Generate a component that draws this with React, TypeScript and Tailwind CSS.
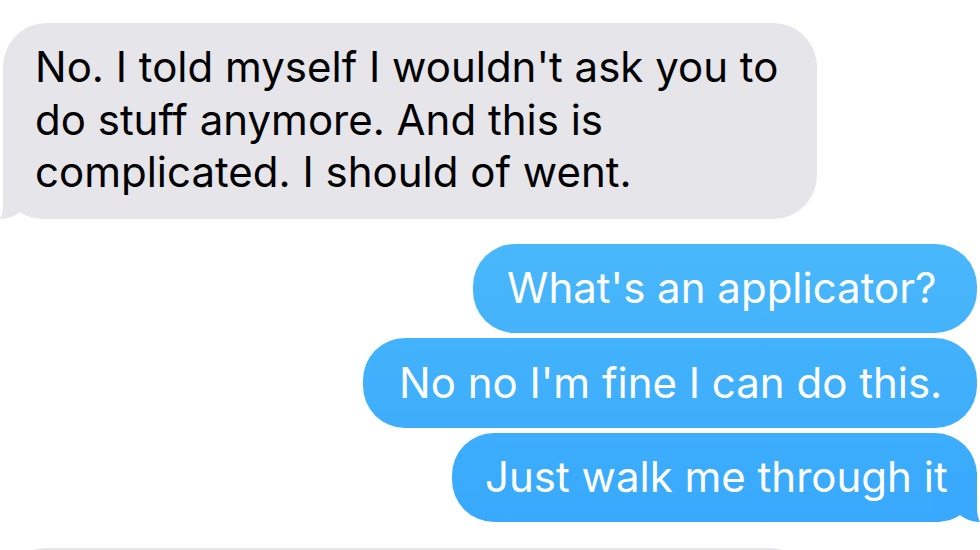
import React from 'react';

const font = { fontFamily: 'Inter, "Noto Sans", sans-serif' };

function GrayTail() {
  return (
    <svg className="absolute left-[-3px] bottom-0 w-[50px] h-[50px]" viewBox="0 0 50 50">
      <path d="M3 0 L3 36 C3 42 2 46 0 50 C8 50 15 47 20 43 C27 48 36 50 47 50 L50 50 L50 0 Z" fill="#e5e5ea" />
    </svg>
  );
}

function BlueTail() {
  return (
    <svg className="absolute right-[-3px] bottom-0 w-[50px] h-[50px]" viewBox="0 0 50 50">
      <path d="M47 0 L47 36 C47 42 48 46 50 50 C42 50 35 47 30 43 C23 48 14 50 3 50 L0 50 L0 0 Z" fill="#38a9fd" />
    </svg>
  );
}

export default function App() {
  return (
    <div className="w-[980px] h-[550px] bg-white overflow-hidden flex flex-col" style={font}>
      {/* incoming */}
      <div className="relative ml-[3px] mt-[23px] w-[814px] rounded-[44px] bg-[#e5e5ea] pl-[32px] pt-[18px] pb-[20px] text-[42px] leading-[52.5px] text-black whitespace-nowrap">
        <GrayTail />
        <span className="relative">
          No. I told myself I wouldn't ask you to<br />
          do stuff anymore. And this is<br />
          complicated. I should of went.
        </span>
      </div>

      {/* outgoing */}
      <div className="mt-[25px] mr-[3px] flex flex-col items-end gap-[5px] text-[42px] leading-[52px] text-white whitespace-nowrap">
        <div className="w-[504px] h-[89px] rounded-[42px] bg-gradient-to-b from-[#48b7fb] to-[#44b3fb] pl-[34px] flex items-center">
          What's an applicator?
        </div>
        <div className="w-[614px] h-[90px] rounded-[42px] bg-gradient-to-b from-[#43b2fc] to-[#3eaefc] pl-[36px] flex items-center">
          No no I'm fine I can do this.
        </div>
        <div className="relative w-[525px] h-[89px] rounded-[42px] bg-gradient-to-b from-[#3dadfc] to-[#38a9fd] pl-[33px] flex items-center">
          <BlueTail />
          <span className="relative">Just walk me through it</span>
        </div>
      </div>

      {/* next incoming, cut off */}
      <div className="ml-[3px] mt-[26px] w-[810px] h-[100px] shrink-0 rounded-[44px] bg-[#e5e5ea]" />
    </div>
  );
}
